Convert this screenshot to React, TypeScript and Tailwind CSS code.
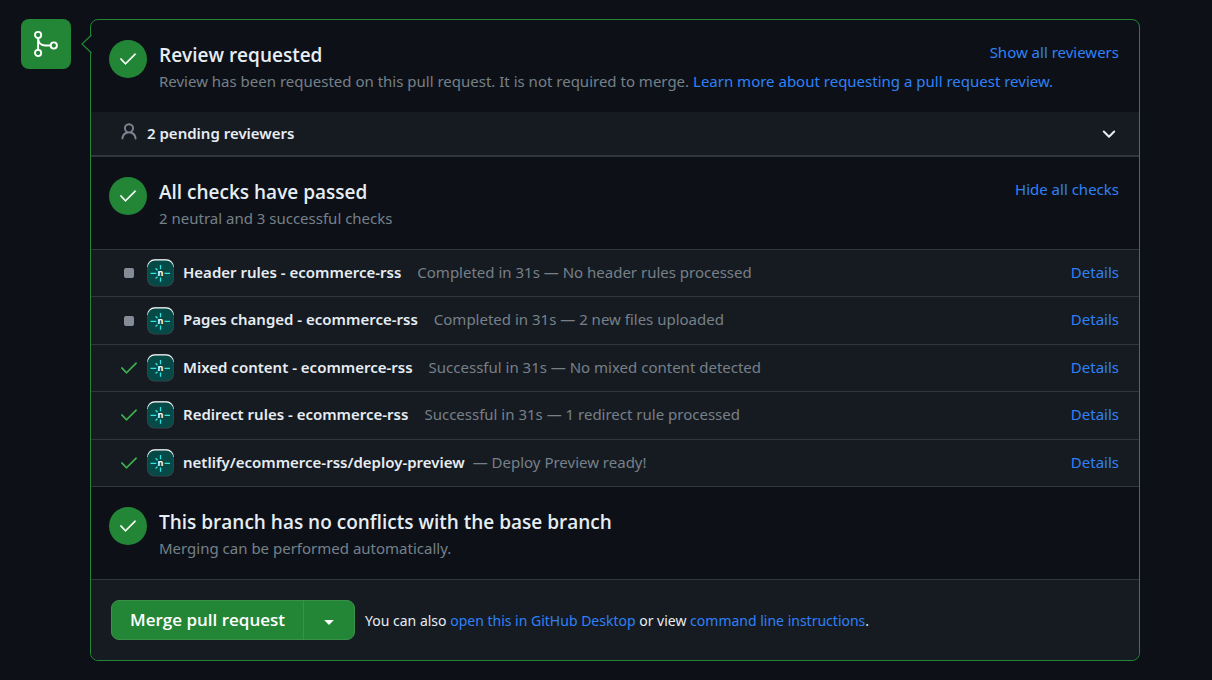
import type { ReactNode } from "react";

function CheckIcon({ className }: { className: string }) {
  return (
    <svg viewBox="0 0 24 24" className={className} fill="currentColor" stroke="currentColor" strokeWidth="0.6" aria-hidden="true">
      <path d="M21.03 5.72a.75.75 0 0 1 0 1.06l-11.5 11.5a.747.747 0 0 1-1.072-.012l-5.5-5.75a.75.75 0 1 1 1.084-1.036l4.97 5.195L19.97 5.72a.75.75 0 0 1 1.06 0Z" />
    </svg>
  );
}

function MergeIcon() {
  return (
    <svg viewBox="0 0 28 28" className="size-7" fill="none" stroke="currentColor" strokeWidth="1.9" aria-hidden="true">
      <circle cx="6.1" cy="5" r="3.1" />
      <circle cx="6.1" cy="23" r="3.1" />
      <circle cx="21.8" cy="15.5" r="3.1" />
      <path d="M6.1 8.1V19.9M6.1 8.4C6.3 12.6 9.2 15.5 13.2 15.5H18.7" />
    </svg>
  );
}

function PersonIcon() {
  return (
    <svg viewBox="0 0 16 16" className="size-5" fill="currentColor" aria-hidden="true">
      <path d="M10.561 8.073a6 6 0 0 1 3.432 5.142.75.75 0 1 1-1.498.07 4.5 4.5 0 0 0-8.99 0 .75.75 0 0 1-1.498-.07 6.004 6.004 0 0 1 3.431-5.142 3.999 3.999 0 1 1 5.123 0ZM10.5 5a2.5 2.5 0 1 0-5 0 2.5 2.5 0 0 0 5 0Z" />
    </svg>
  );
}

function NetlifyLogo() {
  return (
    <svg viewBox="0 0 28 28" className="size-7 shrink-0" role="img" aria-label="Netlify">
      <rect x="0" y="0" width="27" height="27.5" rx="7.5" fill="#3a444b" />
      <path d="M0.3 8a7.5 7.5 0 0 1 7.5-7.7h11.4a7.5 7.5 0 0 1 7.5 7.7z" fill="#ffffff" />
      <rect x="0.8" y="1.5" width="25.4" height="25.3" rx="7" fill="#054a47" />
      <g stroke="#32e6e2" strokeWidth="1.3" fill="none">
        <path d="M3.5 14.4H9.2M17.6 14.4h5.4M13.5 6v4.2M13.5 18.6v4.2" />
        <path d="M8.6 9.3l1.9 1.9M8.6 19.5l1.9-1.9" />
      </g>
      <text x="13.5" y="17" textAnchor="middle" fontSize="9" fontWeight="700" fill="#ffffff">n</text>
    </svg>
  );
}

function TextLink({ children }: { children: ReactNode }) {
  return <a href="#" className="text-[#2f81f7] hover:underline">{children}</a>;
}

function StatusSection({ title, action, children }: { title: string; action?: string; children: ReactNode }) {
  return (
    <section className="flex h-[92px] gap-3 pt-5 pr-5 pl-[18px]">
      <span className="flex size-[38px] shrink-0 items-center justify-center rounded-full bg-[#238636] text-white">
        <CheckIcon className="size-5" />
      </span>
      <div className="min-w-0 flex-1">
        <div className="flex items-start justify-between">
          <h2 className="font-['Open_Sans','Noto_Sans',sans-serif] text-[19px] leading-[30px] font-semibold text-[#e6edf3]">{title}</h2>
          {action && (
            <button type="button" className="cursor-pointer text-[15px] leading-6 text-[#2f81f7]">{action}</button>
          )}
        </div>
        <p className="text-[15px] leading-[23px] whitespace-nowrap text-[#768089]">{children}</p>
      </div>
    </section>
  );
}

const checks = [
  { name: "Header rules - ecommerce-rss", note: "Completed in 31s — No header rules processed", passed: false },
  { name: "Pages changed - ecommerce-rss", note: "Completed in 31s — 2 new files uploaded", passed: false },
  { name: "Mixed content - ecommerce-rss", note: "Successful in 31s — No mixed content detected", passed: true },
  { name: "Redirect rules - ecommerce-rss", note: "Successful in 31s — 1 redirect rule processed", passed: true },
  { name: "netlify/ecommerce-rss/deploy-preview", note: "— Deploy Preview ready!", passed: true, tight: true },
];

export default function App() {
  return (
    <main className="flex min-h-screen items-start bg-[#0d1117] pt-[19px] pr-[72px] pb-[19px] pl-[21px] font-['Noto_Sans','Open_Sans',sans-serif] text-[15px] text-[#e6edf3]">
      <div className="flex size-[50px] shrink-0 items-center justify-center rounded-lg bg-[#238636] text-white">
        <MergeIcon />
      </div>
      <div className="relative ml-[19px] min-w-0 flex-1 rounded-lg border border-[#238636]">
        <svg viewBox="0 0 11 20" className="absolute top-[14px] -left-[10px] h-5 w-[11px]" aria-hidden="true">
          <path d="M11 0.5L1 10L11 19.5z" fill="#0d1117" />
          <path d="M10.5 1L1 10L10.5 19" fill="none" stroke="#238636" strokeWidth="1.2" />
        </svg>

        <StatusSection title="Review requested" action="Show all reviewers">
          Review has been requested on this pull request. It is not required to merge.{" "}
          <TextLink>Learn more about requesting a pull request review.</TextLink>
        </StatusSection>

        <button type="button" className="flex h-[45px] w-full cursor-pointer items-center border-b-2 border-[#30363d] bg-[#161b22] pr-5 pl-7 font-semibold">
          <span className="pb-1 text-[#7d8590]"><PersonIcon /></span>
          <span className="ml-2 flex-1 text-left">2 pending reviewers</span>
          <svg viewBox="0 0 20 20" className="size-5" fill="none" stroke="currentColor" strokeWidth="2" strokeLinecap="round" strokeLinejoin="round" aria-hidden="true">
            <path d="M4.8 7.5L10 12.7L15.2 7.5" />
          </svg>
        </button>

        <StatusSection title="All checks have passed" action="Hide all checks">
          2 neutral and 3 successful checks
        </StatusSection>

        <ul className="grid h-[238px] auto-rows-fr border-b border-[#30363d] bg-[#161b22]">
          {checks.map((check) => (
            <li key={check.name} className="flex items-center border-t border-[#30363d] pr-5 pl-7">
              <span className="flex w-5 justify-center">
                {check.passed ? (
                  <CheckIcon className="size-5 text-[#3fb950]" />
                ) : (
                  <span className="size-[10px] rounded-xs bg-[#848d97]" />
                )}
              </span>
              <span className="ml-2"><NetlifyLogo /></span>
              <p className="ml-2 flex flex-1 items-center pb-0.5">
                <strong className="font-semibold">{check.name}</strong>
                <span className={check.tight ? "ml-2 flex-1 text-[#768089]" : "ml-4 flex-1 text-[#768089]"}>{check.note}</span>
                <TextLink>Details</TextLink>
              </p>
            </li>
          ))}
        </ul>

        <StatusSection title="This branch has no conflicts with the base branch">
          Merging can be performed automatically.
        </StatusSection>

        <footer className="flex h-[81px] items-center gap-[10px] rounded-b-lg border-t border-[#30363d] bg-[#161b22] px-5">
          <div className="flex h-10 rounded-lg border border-[#39924a] bg-[#238636] text-white">
            <button type="button" className="cursor-pointer px-[18px] font-['Open_Sans','Noto_Sans',sans-serif] text-[17px] font-semibold">Merge pull request</button>
            <button type="button" aria-label="Select merge method" className="flex w-[51px] cursor-pointer items-center justify-center border-l border-[#39924a]">
              <svg viewBox="0 0 10 5" className="mt-1 h-[5px] w-[10px]" fill="currentColor" aria-hidden="true">
                <path d="M0.2 0H9.8L5 5z" />
              </svg>
            </button>
          </div>
          <p className="text-[14px]">
            You can also <TextLink>open this in GitHub Desktop</TextLink> or view <TextLink>command line instructions</TextLink>.
          </p>
        </footer>
      </div>
    </main>
  );
}
